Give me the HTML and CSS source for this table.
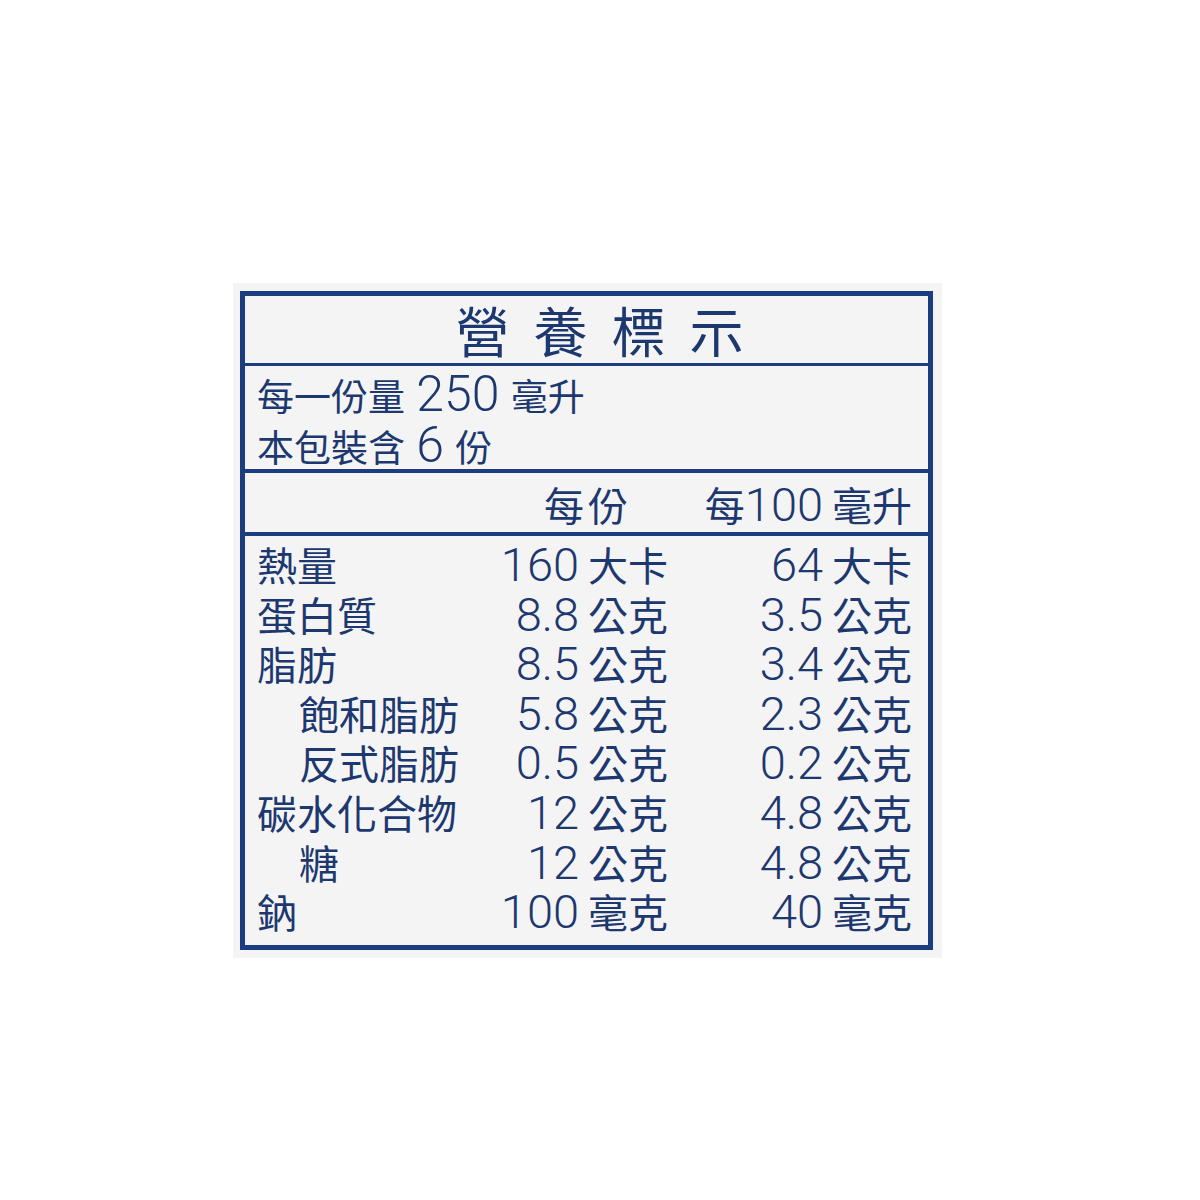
FILE: index.html
```html
<!DOCTYPE html>
<html lang="zh-Hant">
<head>
<meta charset="utf-8">
<title>營養標示</title>
<link rel="stylesheet" href="styles.css">
</head>
<body>
<div class="panel">
  <div class="label">
    <div class="title">營養標示</div>
    <div class="serving">
      <div class="line">每一份量 <span class="n">250</span> 毫升</div>
      <div class="line">本包裝含 <span class="n">6</span> 份</div>
    </div>
    <div class="head">
      <div></div>
      <div class="h2">每份</div>
      <div class="h3">每<span class="n">100</span> 毫升</div>
    </div>
    <div class="data">
      <div class="name">熱量</div><div class="v"><span class="n">160</span> 大卡</div><div class="v"><span class="n">64</span> 大卡</div>
      <div class="name">蛋白質</div><div class="v"><span class="n">8.8</span> 公克</div><div class="v"><span class="n">3.5</span> 公克</div>
      <div class="name">脂肪</div><div class="v"><span class="n">8.5</span> 公克</div><div class="v"><span class="n">3.4</span> 公克</div>
      <div class="name sub">飽和脂肪</div><div class="v"><span class="n">5.8</span> 公克</div><div class="v"><span class="n">2.3</span> 公克</div>
      <div class="name sub">反式脂肪</div><div class="v"><span class="n">0.5</span> 公克</div><div class="v"><span class="n">0.2</span> 公克</div>
      <div class="name">碳水化合物</div><div class="v"><span class="n">12</span> 公克</div><div class="v"><span class="n">4.8</span> 公克</div>
      <div class="name sub">糖</div><div class="v"><span class="n">12</span> 公克</div><div class="v"><span class="n">4.8</span> 公克</div>
      <div class="name">鈉</div><div class="v"><span class="n">100</span> 毫克</div><div class="v"><span class="n">40</span> 毫克</div>
    </div>
  </div>
</div>
</body>
</html>
```

FILE: styles.css
```css
html, body {
  margin: 0;
  padding: 0;
  background: #ffffff;
}
body {
  width: 1200px;
  height: 1200px;
  font-family: "Noto Sans CJK TC", "Noto Sans CJK SC", sans-serif;
  color: #1d386f;
}
.panel {
  margin: 283px 0 0 233px;
  width: 709px;
  height: 675px;
  background: #f4f4f5;
  padding: 8px 9px 8px 7px;
  box-sizing: border-box;
}
.label {
  border: 5px solid #1c3d80;
  height: 659px;
  box-sizing: border-box;
  display: flex;
  flex-direction: column;
}
.n {
  font-family: Roboto, "Liberation Sans", sans-serif;
  font-weight: 300;
  font-size: 47px;
  line-height: 1;
}
.title {
  height: 67px;
  border-bottom: 3px solid #1c3d80;
  font-size: 54px;
  line-height: 67px;
  letter-spacing: 24px;
  text-align: center;
  padding-left: 50px;
  box-sizing: content-box;
}
.serving {
  height: 107px;
  border-bottom: 4px solid #1c3d80;
  padding: 3px 0 0 12px;
  box-sizing: border-box;
  font-size: 37px;
  word-spacing: 3px;
}
.serving .n {
  font-size: 50px;
}
.line {
  height: 51px;
  line-height: 51px;
}
.head {
  height: 59px;
  border-bottom: 4px solid #1c3d80;
  display: grid;
  grid-template-columns: 1fr 200px 244px;
  padding: 0 16px 0 12px;
  font-size: 40px;
  line-height: 62px;
  text-align: right;
}
.h2 {
  padding-right: 36px;
  letter-spacing: 4px;
}
.data {
  display: grid;
  grid-template-columns: 1fr 200px 244px;
  grid-auto-rows: 49.6px;
  padding: 4px 16px 0 12px;
  font-size: 40px;
  line-height: 49.6px;
}
.name.sub {
  padding-left: 42px;
}
.v {
  text-align: right;
  white-space: nowrap;
}
```
